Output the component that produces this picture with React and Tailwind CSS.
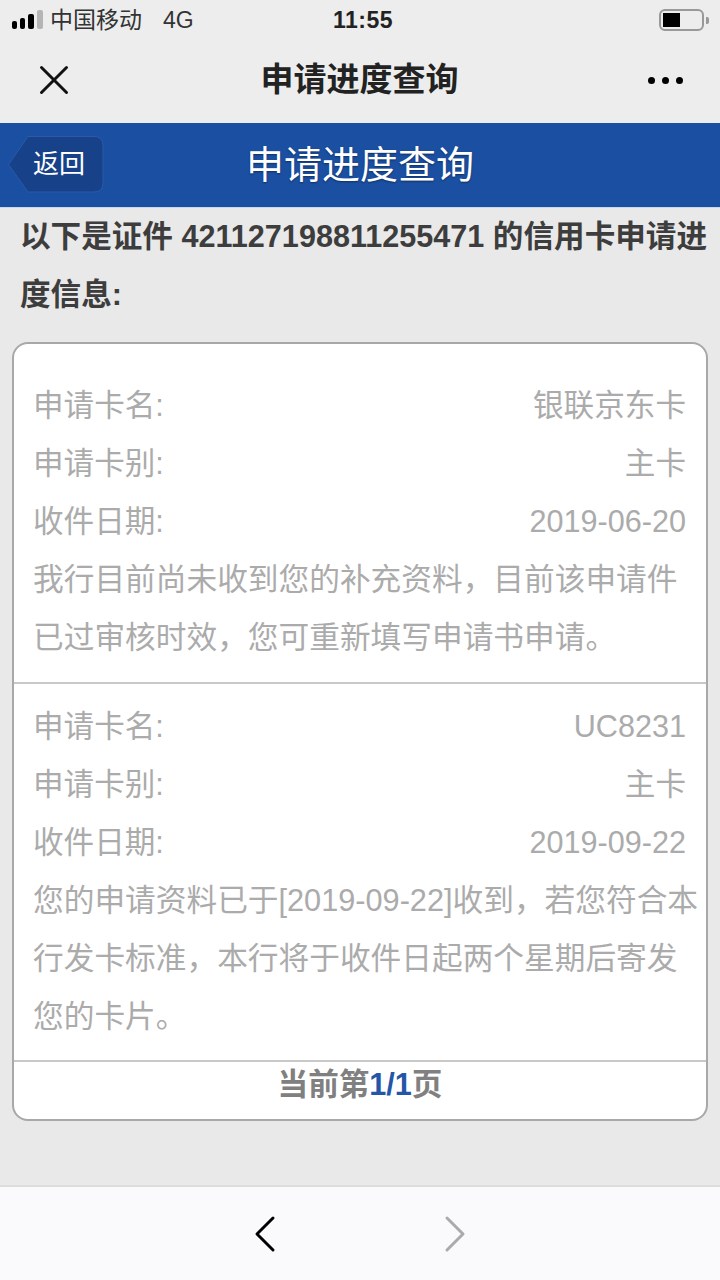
import React from 'react';
import { ChevronLeft, ChevronRight, X } from 'lucide-react';

const font = 'font-["Liberation_Sans","Noto_Sans_CJK_SC",sans-serif]';

const Row = ({ label, value }) => (
  <div className="flex justify-between h-[58px] items-center">
    <span>{label}</span>
    <span>{value}</span>
  </div>
);

const Note = ({ children }) => <p className="leading-[58px] text-[30.7px]">{children}</p>;

function StatusBar() {
  return (
    <div className="h-10 flex items-center pl-3 pr-[11px] text-[#222]">
      <div className="flex-1 flex items-center">
        <div className="flex items-end gap-[3px] h-[20px] pb-[1px]">
          <span className="w-[5px] h-[8px] rounded-[2px] bg-black" />
          <span className="w-[5px] h-[11px] rounded-[2px] bg-black" />
          <span className="w-[6px] h-[15px] rounded-[2px] bg-black" />
          <span className="w-[6px] h-[19px] rounded-[2px] bg-[#b5b5b5]" />
        </div>
        <span className="ml-[7px] text-[23px] text-[#333]">中国移动</span>
        <span className="ml-[21px] text-[23px] text-[#333]">4G</span>
      </div>
      <span className="text-[23px] font-bold tracking-[0.5px] ml-[5px]">11:55</span>
      <div className="flex-1 flex items-center justify-end">
        <div className="w-[45px] h-[22px] rounded-[6px] border-2 border-[#999] p-[2px] flex">
          <span className="w-[17px] bg-black" />
        </div>
        <span className="w-[3px] h-[7px] bg-[#999] rounded-r-[2px] ml-[2px]" />
      </div>
    </div>
  );
}

export default function App() {
  return (
    <div className={`${font} w-[720px] h-[1280px] bg-[#e9e9e9] flex flex-col overflow-hidden`}>
      <div className="bg-[#ededed]">
        <StatusBar />
        <div className="h-[83px] flex items-center justify-between pl-[29px] pr-[36px] pb-[3px]">
          <X size={50} strokeWidth={3} color="#111" absoluteStrokeWidth />
          <span className="text-[33px] font-bold text-[#222] -ml-[8px]">申请进度查询</span>
          <div className="flex gap-[7px] w-[36px]">
            <span className="w-[7px] h-[7px] rounded-full bg-black shrink-0" />
            <span className="w-[7px] h-[7px] rounded-full bg-black shrink-0" />
            <span className="w-[7px] h-[7px] rounded-full bg-black shrink-0" />
          </div>
        </div>
      </div>

      <div className="h-[85px] bg-[#1b4fa2] relative flex items-center justify-center border-b border-[#c9d6ea]">
        <div className="absolute left-[8px] top-[13px] w-[96px] h-[57px]">
          <svg width="96" height="57" viewBox="0 0 96 57" className="absolute inset-0">
            <path d="M0.5 28.5 L20 0.5 H86 Q95 0.5 95 10 V47 Q95 56 86 56 H20 Z" fill="#174189" stroke="#2a5aa8" strokeWidth="1" />
          </svg>
          <span className="absolute left-[25px] top-[12px] text-[26px] leading-[32px] text-white">返回</span>
        </div>
        <span className="text-[38px] text-white [text-shadow:0_1px_2px_rgba(0,0,0,0.4)]">申请进度查询</span>
      </div>

      <div className="pl-[20px] pr-[8px] text-[30.6px] font-bold leading-[58px] text-[#3d3d3d] -mt-[1px]">
        以下是证件 421127198811255471 的信用卡申请进度信息:
      </div>

      <div className="mt-[19px] mx-[12px] h-[779px] bg-white border-2 border-[#a8a8a8] rounded-[16px] flex flex-col text-[30.6px] text-[#ababab]">
        <div className="pt-[33px] pb-[15px] pl-[19px] pr-[20px] border-b-2 border-[#c8c8c8]">
          <Row label="申请卡名:" value="银联京东卡" />
          <Row label="申请卡别:" value="主卡" />
          <Row label="收件日期:" value="2019-06-20" />
          <Note>我行目前尚未收到您的补充资料，目前该申请件已过审核时效，您可重新填写申请书申请。</Note>
        </div>
        <div className="pt-[14px] pb-[14px] pl-[19px] pr-[6px] border-b-2 border-[#c8c8c8]">
          <div className="pr-[14px]">
            <Row label="申请卡名:" value="UC8231" />
            <Row label="申请卡别:" value="主卡" />
            <Row label="收件日期:" value="2019-09-22" />
          </div>
          <Note>您的申请资料已于[2019-09-22]收到，若您符合本行发卡标准，本行将于收件日起两个星期后寄发您的卡片。</Note>
        </div>
        <div className="h-[46px] flex items-center justify-center text-[30.6px] font-bold text-[#808080]">
          当前第<span className="text-[#2455a8]">1/1</span>页
        </div>
      </div>

      <div className="mt-[64px] flex-1 bg-[#fafafc] border-t-2 border-[#dcdcdc] flex items-center justify-center gap-[126px]">
        <ChevronLeft size={64} strokeWidth={3} absoluteStrokeWidth color="#000" />
        <ChevronRight size={64} strokeWidth={3} absoluteStrokeWidth color="#aaa" />
      </div>
    </div>
  );
}
